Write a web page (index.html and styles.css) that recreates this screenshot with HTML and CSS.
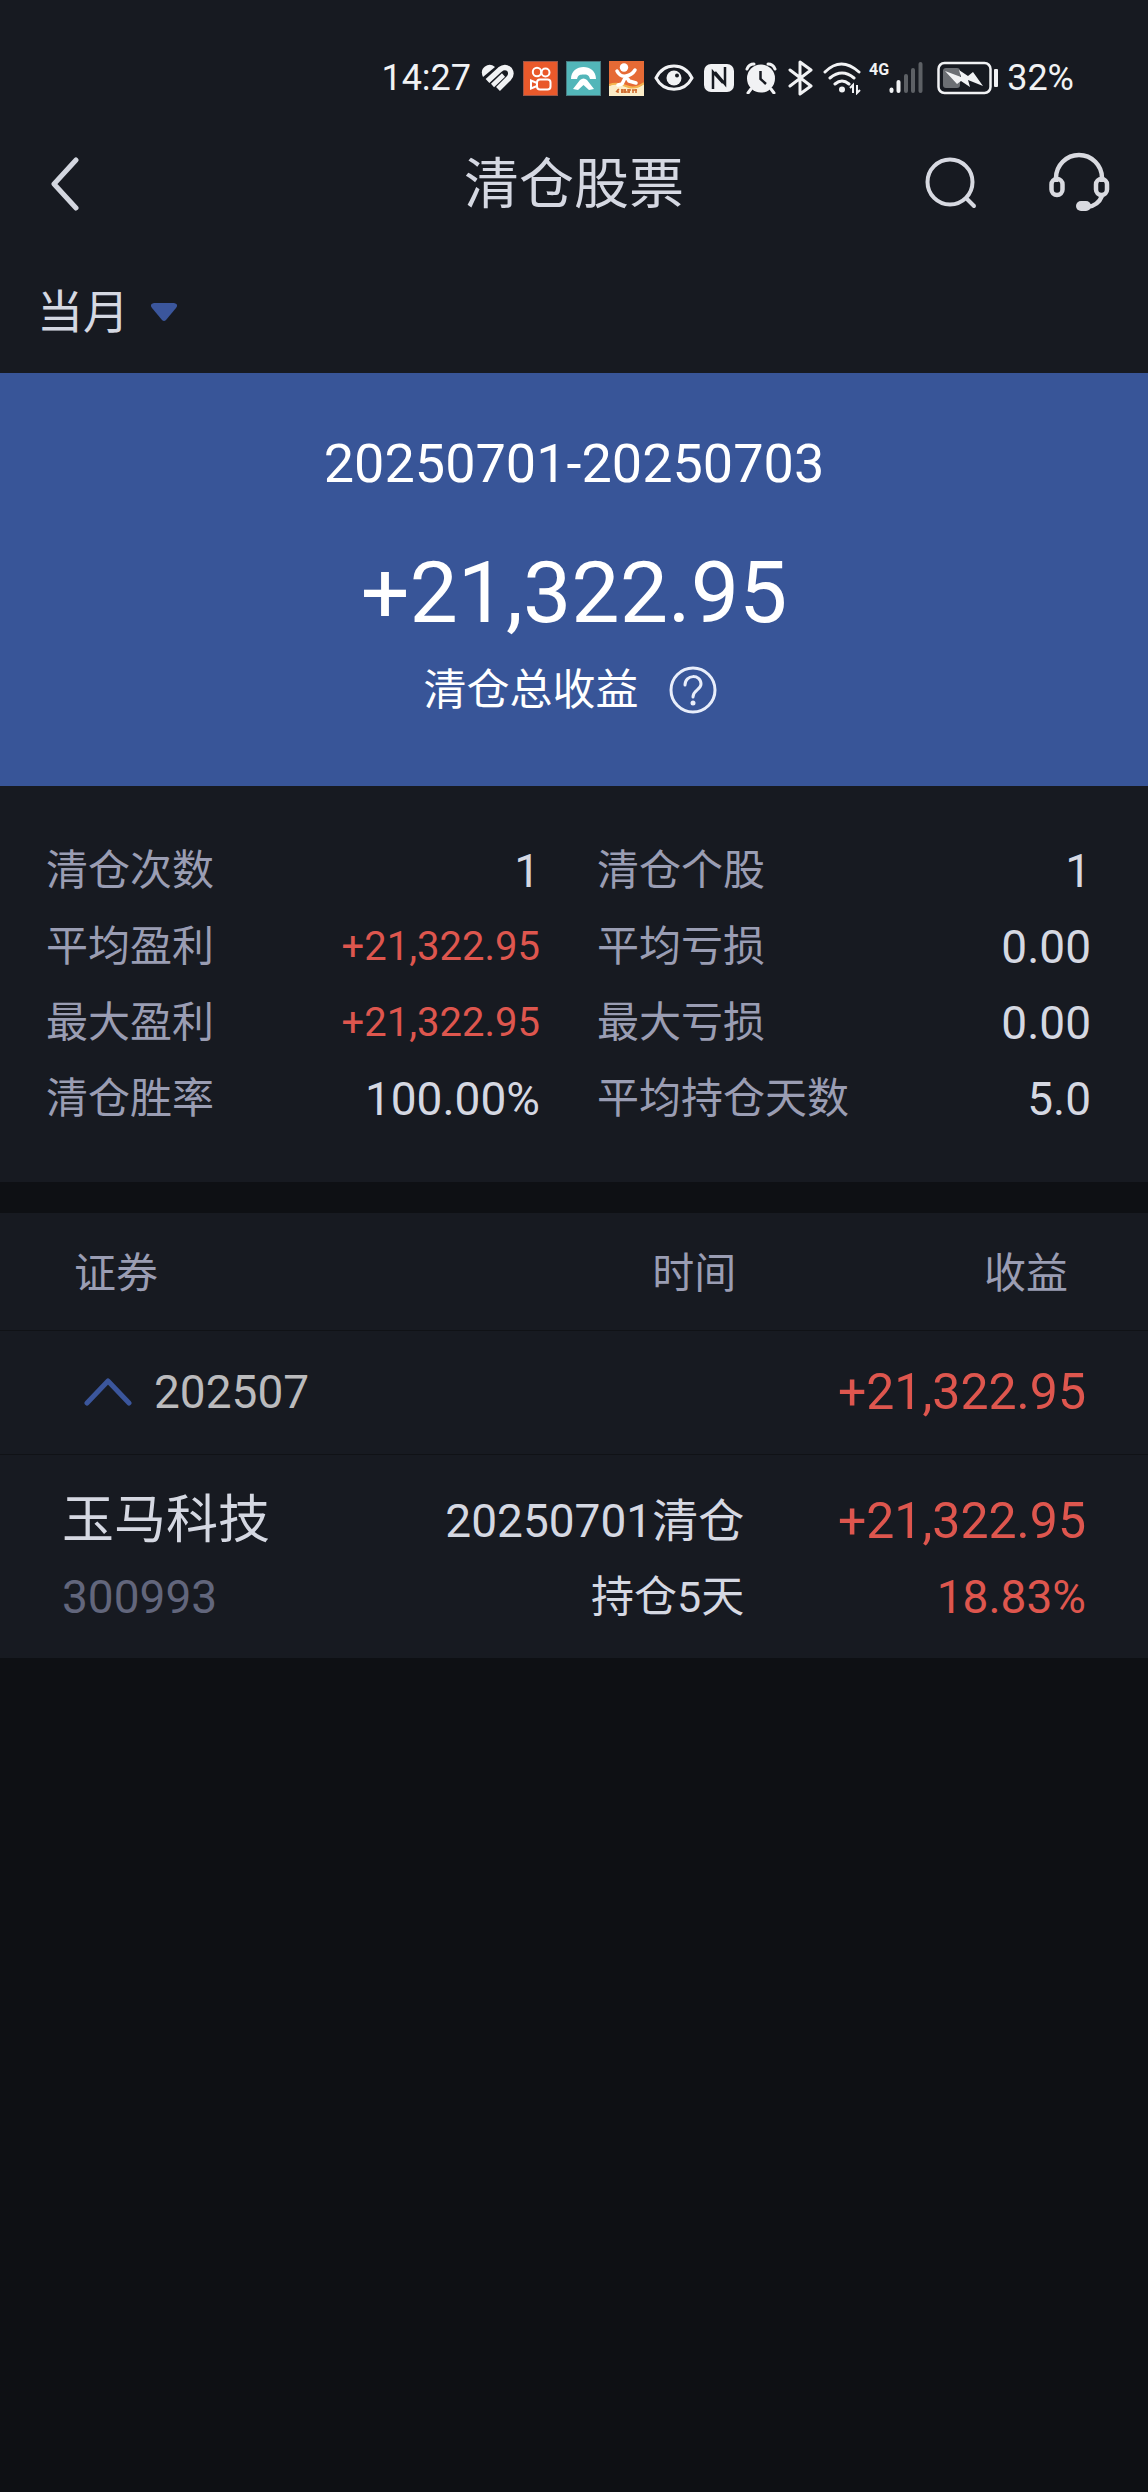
FILE: index.html
```html
<!DOCTYPE html>
<html lang="zh-CN">
<head>
<meta charset="utf-8">
<meta name="viewport" content="width=device-width, initial-scale=1">
<title>清仓股票</title>
<link rel="stylesheet" href="styles.css">
</head>
<body>
<div class="top">
  <div class="status">
    <span class="status-text">14:27</span>
    <svg class="ic-heart" width="34" height="28" viewBox="0 0 34 28" aria-hidden="true">
      <path d="M2 13Q-1 6 4 2.500Q9-1 14 3Z" fill="#f1f2f4"/>
      <path d="M6.500 17L19 5.500Q24 1.500 28.500 5.500Q31.500 10 28 14L17 25" fill="none" stroke="#f1f2f4" stroke-width="5.500"/><path d="M11.500 21.500L22.500 11" stroke="#f1f2f4" stroke-width="4.500"/>
    </svg>
    <svg class="ic-app" width="35" height="35" viewBox="0 0 35 35" aria-hidden="true">
      <rect width="35" height="35" fill="#e9592b"/><rect x=".5" y=".5" width="34" height="34" fill="none" stroke="#9b5648"/>
      <g fill="none" stroke="#fff" stroke-width="2"><circle cx="14" cy="11" r="4.2"/><circle cx="22.500" cy="11.500" r="4"/><rect x="14" y="18.500" width="13.500" height="10" rx="3"/><path d="M14 22L8 19.500V27.500L14 25"/></g>
    </svg>
    <svg class="ic-app" width="35" height="35" viewBox="0 0 35 35" aria-hidden="true">
      <rect width="35" height="35" fill="#52b6b9"/><rect x=".5" y=".5" width="34" height="34" fill="none" stroke="#4a7c82"/>
      <path fill="#fff" d="M5 18C5 10 11 6 17.500 6S30 10 30 18H24C23 14 21 13.500 17.500 13.500S12 14 11 18ZM7 28L14 19Q17.500 16 21 19L28 28L23 29L17.500 24L12 29Z"/>
    </svg>
    <svg class="ic-app" width="35" height="35" viewBox="0 0 35 35" aria-hidden="true">
      <rect width="35" height="35" fill="#e66a35"/><path d="M0 25Q8 20 17 25T35 23V35H0Z" fill="#fcedc8"/>
      <path d="M0 24Q8 21 17 25T35 22" fill="none" stroke="#f4b44e" stroke-width="2"/>
      <circle cx="15" cy="6.500" r="4.200" fill="#fff"/>
      <path d="M8 10Q11 16 17 15T26 9M17 15L13 23L9 24M17 15L20 20L27 22" fill="none" stroke="#fff" stroke-width="3.500" stroke-linecap="round" stroke-linejoin="round"/>
      <path d="M7 31L10 28M9 28V32M12 29H17M13 28V32M16 28V32M18 29H22M20 28V32M23 29H28M24 29V32M27 28V32M12 31H21" stroke="#cf6a2c" stroke-width="1.500"/>
    </svg>
    <svg class="ic-eye" width="40" height="28" viewBox="0 0 40 28" aria-hidden="true">
      <path d="M2 14C10-2 30-2 38 14C30 29 10 29 2 14Z" fill="none" stroke="#f1f2f4" stroke-width="3"/><circle cx="20" cy="14" r="7.500" fill="#f1f2f4"/><circle cx="23" cy="11.500" r="2" fill="#171a21"/>
    </svg>
    <svg class="ic-nfc" width="30" height="30" viewBox="0 0 30 30" aria-hidden="true">
      <rect y="1" width="30" height="28" rx="7" fill="#f1f2f4"/><path d="M9 26V9L19 20M21 4V21L11 9" fill="none" stroke="#171a21" stroke-width="2.500"/>
    </svg>
    <svg class="ic-alarm" width="32" height="32" viewBox="0 0 32 32" aria-hidden="true">
      <circle cx="16" cy="16.500" r="14" fill="#f1f2f4"/><path d="M2 7Q4 2 9 2M23 2Q28 2 30 7M6 27L3 31M26 27L29 31" stroke="#f1f2f4" stroke-width="3" stroke-linecap="round" fill="none"/><path d="M15.500 9V17L21 22" stroke="#171a21" stroke-width="2.500" fill="none"/>
    </svg>
    <svg class="ic-bt" width="26" height="36" viewBox="0 0 26 36" aria-hidden="true">
      <path d="M2 10L23 26L12 34V2L23 10L2 26" fill="none" stroke="#f1f2f4" stroke-width="3" stroke-linecap="round" stroke-linejoin="round"/>
    </svg>
    <svg class="ic-wifi" width="40" height="34" viewBox="0 0 40 34" aria-hidden="true">
      <path d="M2 11Q18-5 36 11M7 17Q19 7 31 17M12 23Q19 17 26 23" fill="none" stroke="#f1f2f4" stroke-width="3" stroke-linecap="round"/><circle cx="19" cy="28.500" r="3" fill="#f1f2f4"/><path d="M27 27L30 24V32M34 24V32L37 29" fill="none" stroke="#f1f2f4" stroke-width="2"/>
    </svg>
    <span class="net">4G</span>
    <svg class="ic-signal" width="34" height="32" viewBox="0 0 34 32" aria-hidden="true">
      <g stroke-width="4" stroke-linecap="round"><path d="M2.500 27.500V29" stroke="#f1f2f4"/><path d="M9.500 20V29" stroke="#f1f2f4"/><path d="M17 14V29M24 8V29M31.500 2V29" stroke="#5d6065"/></g>
    </svg>
    <svg class="ic-batt" width="62" height="34" viewBox="0 0 62 34" aria-hidden="true">
      <rect x="1.500" y="2" width="52" height="30" rx="6" fill="none" stroke="#f1f2f4" stroke-width="2.500"/><rect x="6" y="7" width="17" height="20" rx="3" fill="#6c6f74"/><path d="M8 10L24 16L22 9L31 15L36 11L46 25L31 19L33 26L24 20L20 23Z" fill="#f1f2f4"/><rect x="57" y="8" width="4" height="18" rx="1" fill="#f1f2f4"/>
    </svg>
    <span class="status-text">32%</span>
  </div>

  <header class="nav">
    <button class="icon-btn back" type="button" aria-label="返回">
      <svg width="28" height="54" viewBox="0 0 28 54"><path d="M25 3L3 27L25 51" fill="none" stroke="#d3d6df" stroke-width="5" stroke-linecap="round" stroke-linejoin="round"/></svg>
    </button>
    <h1 class="title">清仓股票</h1>
    <div class="actions">
      <button class="icon-btn" type="button" aria-label="搜索">
        <svg width="54" height="60" viewBox="0 0 54 60"><g fill="none" stroke="#d7d9e1" stroke-width="4" stroke-linecap="round"><circle cx="26" cy="28" r="22.500"/><path d="M43 45L50 52"/></g></svg>
      </button>
      <button class="icon-btn" type="button" aria-label="客服">
        <svg width="62" height="64" viewBox="0 0 62 64"><g fill="none" stroke="#d9dae0" stroke-width="4.500"><path d="M8 30V26A23 23 0 0 1 54 26V30"/><rect x="3.500" y="27" width="11" height="16" rx="5.500"/><rect x="48" y="27" width="11" height="16" rx="5.500"/><path d="M54 44Q50 54 39 55"/></g><rect x="28" y="49" width="15" height="10" rx="5" fill="#d9dae0"/></svg>
      </button>
    </div>
  </header>

  <div class="filter">
    <select class="period" aria-label="统计周期"><option>当月</option></select>
    <svg class="caret" width="26" height="18" viewBox="0 0 26 18" aria-hidden="true"><path d="M3 0H23Q28 1 25 5L15 17Q13 19 11 17L1 5Q-2 1 3 0Z" fill="#3b569c"/></svg>
  </div>
</div>

<section class="hero">
  <p class="range">20250701-20250703</p>
  <p class="total">+21,322.95</p>
  <div class="caption">
    <span>清仓总收益</span>
    <button class="icon-btn" type="button" aria-label="说明">
      <svg width="48" height="48" viewBox="0 0 48 48"><g fill="none" stroke="#e9eefb" stroke-width="3" stroke-linecap="round"><circle cx="24" cy="24" r="22"/><path d="M16 19C16 8 32 8 32 18C32 24 24 24 24 31"/></g><circle cx="24" cy="37" r="2.500" fill="#e9eefb"/></svg>
    </button>
  </div>
</section>

<dl class="stats">
  <div class="stat"><dt>清仓次数</dt><dd>1</dd></div>
  <div class="stat"><dt>清仓个股</dt><dd>1</dd></div>
  <div class="stat"><dt>平均盈利</dt><dd class="gain">+21,322.95</dd></div>
  <div class="stat"><dt>平均亏损</dt><dd>0.00</dd></div>
  <div class="stat"><dt>最大盈利</dt><dd class="gain">+21,322.95</dd></div>
  <div class="stat"><dt>最大亏损</dt><dd>0.00</dd></div>
  <div class="stat"><dt>清仓胜率</dt><dd>100.00%</dd></div>
  <div class="stat"><dt>平均持仓天数</dt><dd>5.0</dd></div>
</dl>

<table class="trades">
  <colgroup><col class="col-name"><col class="col-time"><col></colgroup>
  <thead>
    <tr><th scope="col">证券</th><th scope="col">时间</th><th scope="col">收益</th></tr>
  </thead>
  <tbody>
    <tr class="month">
      <td colspan="2">
        <button class="toggle" type="button" aria-expanded="true">
          <svg width="48" height="30" viewBox="0 0 48 30" aria-hidden="true"><path d="M3 26L24 4L45 26" fill="none" stroke="#3b569c" stroke-width="5" stroke-linecap="round" stroke-linejoin="round"/></svg>
          <span>202507</span>
        </button>
      </td>
      <td class="profit">+21,322.95</td>
    </tr>
    <tr class="trade">
      <td><div class="name">玉马科技</div><div class="code">300993</div></td>
      <td><div class="date">20250701清仓</div><div class="days">持仓5天</div></td>
      <td class="profit"><div>+21,322.95</div><div class="rate">18.83%</div></td>
    </tr>
  </tbody>
</table>
</body>
</html>
```

FILE: styles.css
```css
* { box-sizing: border-box; }

body {
  margin: 0;
  min-height: 100vh;
  background: #0e1014;
  color: #d5d8e2;
  font-family: Roboto, "Noto Sans CJK SC", sans-serif;
  font-size: 42px;
}

h1, p, dl, dd { margin: 0; font-weight: 400; }

button, select {
  appearance: none;
  border: 0;
  padding: 0;
  background: none;
  color: inherit;
  font: inherit;
}

svg { display: block; flex: none; }

.top { background: #171a21; }

/* system status bar */
.status {
  display: flex;
  justify-content: flex-end;
  align-items: center;
  height: 128px;
  padding: 28px 74px 0 0;
  color: #f1f2f4;
}
.status-text { font-size: 36px; line-height: 40px; }
.ic-heart { margin: 0 8px 0 10px; }
.ic-app { margin-right: 8px; }
.ic-eye { margin: 0 10px 0 2px; }
.ic-nfc { margin-right: 11px; }
.ic-alarm { margin-right: 11px; }
.ic-bt { margin-right: 9px; }
.ic-wifi { margin-right: 6px; }
.net { align-self: flex-start; margin-top: 30px; font-size: 16px; line-height: 24px; font-weight: 700; }
.ic-batt { margin: 0 8px 0 14px; }

/* title bar */
.nav {
  display: grid;
  grid-template-columns: 1fr auto 1fr;
  align-items: center;
  height: 112px;
  padding: 0 38px;
}
.icon-btn { display: block; }
.back { justify-self: start; margin-left: 13px; }
.title { font-size: 55px; line-height: 80px; }
.actions { display: flex; align-items: center; justify-content: flex-end; gap: 70px; }

.filter {
  display: flex;
  align-items: center;
  height: 133px;
  padding: 10px 0 0 37px;
}
.period { font-size: 46px; line-height: 64px; }
.caret { margin-left: 22px; }

/* total result */
.hero {
  display: flex;
  flex-direction: column;
  align-items: center;
  padding: 54px 0 66px;
  background: #385598;
  color: #fff;
}
.range { font-size: 54px; line-height: 74px; }
.total { margin: 42px 0 17px; font-size: 86px; line-height: 100px; }
.caption { display: flex; align-items: center; gap: 30px; height: 60px; padding-right: 8px; font-size: 43px; line-height: 60px; }

/* figures in two columns */
.stats {
  display: grid;
  grid-template-columns: 1fr 1fr;
  column-gap: 57px;
  padding: 47px 57px 45px 46px;
  background: #171a21;
}
.stat { display: flex; justify-content: space-between; height: 76px; line-height: 76px; }
.stat dt { color: #9a9db3; }
.stat dd { font-size: 46px; }
.stat .gain { font-size: 40px; }
.gain, .profit { color: #de564e; }

/* closed positions */
.trades {
  width: 100%;
  margin-top: 31px;
  table-layout: fixed;
  border-collapse: collapse;
  background: #171a21;
}
.col-name { width: 30%; }
.col-time { width: 35%; }
th, td { padding: 0; text-align: right; vertical-align: middle; }
th { height: 117px; padding: 0 80px 4px 0; color: #9a9db3; font-weight: 400; }
th:first-child { padding: 0 0 4px 74px; text-align: left; }
th:nth-child(2) { padding-right: 10px; }
thead tr, .month { border-bottom: 1px solid #101216; }
.month td { height: 124px; }
.month td:first-child, .trade td:first-child { text-align: left; }
.toggle { display: flex; align-items: center; gap: 22px; padding-left: 84px; color: #bbbbbd; font-size: 46px; }
.trades .profit { padding-right: 62px; font-size: 50px; }
.trade td { padding: 28px 2px 23px 0; line-height: 76px; }
.trade td:first-child { padding-left: 62px; }
.name { font-size: 52px; }
.code { color: #62667c; font-size: 46px; }
.date { font-size: 46px; }
.days { font-size: 43px; }
.rate { font-size: 46px; }
```
